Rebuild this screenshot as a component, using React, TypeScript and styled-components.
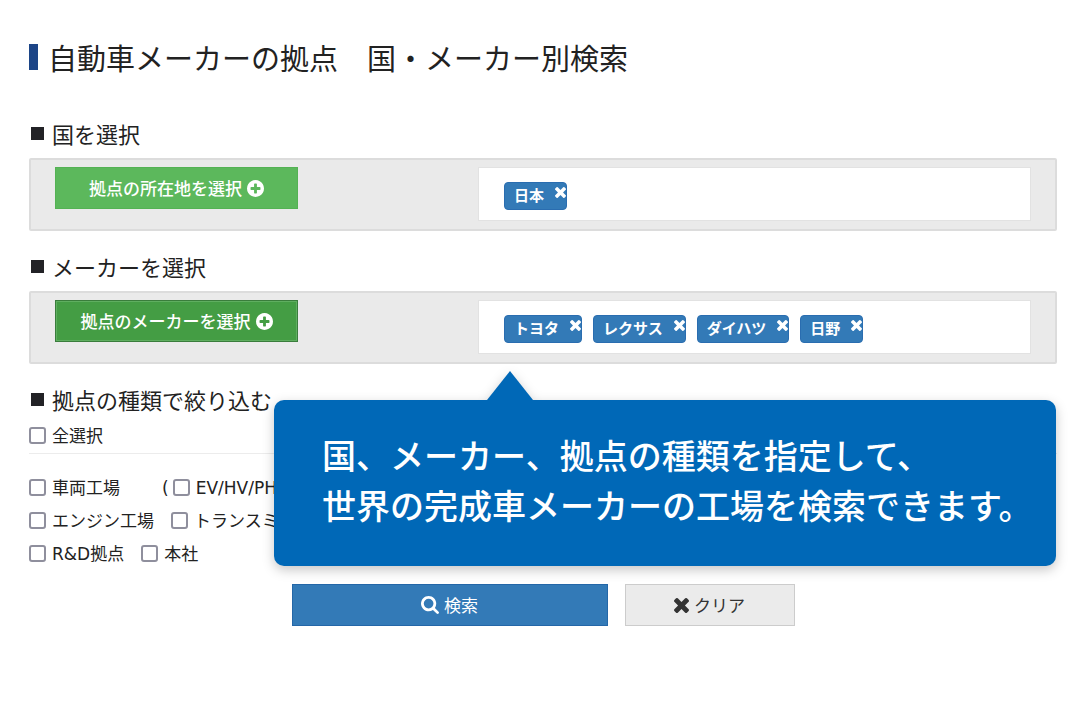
import React from "react";
import styled, { createGlobalStyle, css } from "styled-components";

const GlobalStyle = createGlobalStyle`
  *, *::before, *::after { box-sizing: border-box; }
  body {
    margin: 0;
    background: #fff;
    color: #222;
    font-family: "Noto Sans CJK JP", "Noto Sans", sans-serif;
    font-size: 17px;
  }
`;

const Page = styled.main`
  padding: 36px 29px 32px;
`;

const Title = styled.h1`
  display: flex;
  align-items: center;
  gap: 10px;
  margin: 0 0 40px;
  font-size: 29px;
  font-weight: 400;
  line-height: 42px;

  &::before {
    content: "";
    width: 9px;
    height: 26px;
    background: #1c4587;
  }
`;

const Section = styled.section`
  margin-bottom: 20px;
`;

const Heading = styled.h2`
  display: flex;
  align-items: center;
  gap: 8px;
  margin: 0;
  padding-left: 2px;
  font-size: 22px;
  font-weight: 400;
  line-height: 30px;

  &::before {
    content: "";
    width: 13px;
    height: 13px;
    background: #222226;
  }
`;

const Panel = styled.div`
  display: grid;
  grid-template-columns: 13fr 17fr;
  align-items: start;
  margin-top: 10px;
  padding: 7px 24px 8px;
  border: 2px solid #dcdcdc;
  border-radius: 2px;
  background: #eaeaea;
`;

const buttonBase = css`
  display: inline-flex;
  align-items: center;
  justify-content: center;
  gap: 5px;
  height: 42px;
  padding: 0;
  border: 1px solid;
  font-family: inherit;
  font-size: 17px;
  line-height: 24px;
  cursor: pointer;
`;

const PickButton = styled.button<{ $active?: boolean }>`
  ${buttonBase}
  width: 243px;
  font-weight: 500;
  color: #fff;
  background: ${(p) => (p.$active ? "#449d44" : "#5cb85c")};
  border-color: ${(p) => (p.$active ? "#3a7d3c" : "#54b254")};
  box-shadow: ${(p) => (p.$active ? "inset 0 0 0 1px #5fae60" : "none")};
`;

const Well = styled.ul`
  display: flex;
  flex-wrap: wrap;
  gap: 11px;
  min-height: 54px;
  margin: 0;
  padding: 14px 25px 10px;
  border: 1px solid #e2e2e2;
  background: #fff;
  list-style: none;
`;

const Tag = styled.li`
  display: flex;
  align-items: flex-start;
  justify-content: space-between;
  gap: 11px;
  height: 28px;
  padding-left: 9px;
  border: 1px solid #2a6db0;
  border-radius: 4px;
  background: #337ab7;
  color: #fff;
  font-size: 15px;
  font-weight: 700;
  line-height: 24px;
`;

const RemoveButton = styled.button`
  display: flex;
  margin-top: 4px;
  padding: 0;
  border: 0;
  background: none;
  color: inherit;
  cursor: pointer;
`;

const Filter = styled.section`
  position: relative;
`;

const OptionRow = styled.div`
  display: flex;
  align-items: center;
  gap: 17px;
  height: 33px;
  font-family: "DejaVu Sans", "Noto Sans CJK JP", sans-serif;
  white-space: nowrap;
`;

const SelectAllRow = styled(OptionRow)`
  height: 40px;
  margin-bottom: 17px;
  padding-top: 4px;
  border-bottom: 1px solid #ececec;
`;

const Group = styled.span`
  display: flex;
  align-items: center;
  gap: 4px;
  padding-left: 25px;
`;

const OptionLabel = styled.label`
  display: flex;
  align-items: center;
  gap: 6px;
  line-height: 24px;
`;

const Checkbox = styled.input`
  appearance: none;
  width: 17px;
  height: 17px;
  margin: 0;
  border: 2px solid #8f8f9d;
  border-radius: 3px;
  background: #fff;

  &:checked {
    background: #337ab7;
  }
`;

const Callout = styled.aside`
  position: absolute;
  top: 16px;
  left: 245px;
  right: 1px;
  padding: 30px 16px 36px 48px;
  border-radius: 10px;
  background: #0068b7;
  color: #fff;
  filter: drop-shadow(0 4px 6px rgba(0, 0, 0, 0.22));

  &::before {
    content: "";
    position: absolute;
    bottom: 100%;
    left: 213px;
    border: solid transparent;
    border-width: 0 23px 29px;
    border-bottom-color: #0068b7;
  }
`;

const CalloutText = styled.p`
  margin: 0;
  font-size: 34px;
  font-weight: 500;
  line-height: 50px;
`;

const Actions = styled.div`
  display: flex;
  justify-content: center;
  gap: 17px;
  margin-top: 14px;
`;

const SearchButton = styled.button`
  ${buttonBase}
  width: 316px;
  color: #fff;
  background: #337ab7;
  border-color: #2467a8;
`;

const ClearButton = styled.button`
  ${buttonBase}
  width: 170px;
  color: #333;
  background: #ebebeb;
  border-color: #ccc;
`;

const ICONS = {
  plus: "M1344 960v-128q0-26-19-45t-45-19h-256v-256q0-26-19-45t-45-19h-128q-26 0-45 19t-19 45v256h-256q-26 0-45 19t-19 45v128q0 26 19 45t45 19h256v256q0 26 19 45t45 19h128q26 0 45-19t19-45v-256h256q26 0 45-19t19-45zm320-64q0 209-103 385.5t-279.5 279.5-385.5 103-385.5-103-279.5-279.5-103-385.5 103-385.5 279.5-279.5 385.5-103 385.5 103 279.5 279.5 103 385.5z",
  times:
    "M1490 1322q0 40-28 68l-136 136q-28 28-68 28t-68-28l-294-294-294 294q-28 28-68 28t-68-28l-136-136q-28-28-28-68t28-68l294-294-294-294q-28-28-28-68t28-68l136-136q28-28 68-28t68 28l294 294 294-294q28-28 68-28t68 28l136 136q28 28 28 68t-28 68l-294 294 294 294q28 28 28 68z",
  search:
    "M1216 832q0-185-131.5-316.5t-316.5-131.5-316.5 131.5-131.5 316.5 131.5 316.5 316.5 131.5 316.5-131.5 131.5-316.5zm512 832q0 52-38 90t-90 38q-54 0-90-38l-343-342q-179 124-399 124-143 0-273.5-55.5t-225-150-150-225-55.5-273.5 55.5-273.5 150-225 225-150 273.5-55.5 273.5 55.5 225 150 150 225 55.5 273.5q0 220-124 399l343 343q37 37 37 90z",
};

const VIEW_BOXES = {
  plus: "128 128 1536 1536",
  times: "302 366 1188 1188",
  search: "64 128 1664 1664",
};

function Icon({ name, size }: { name: keyof typeof ICONS; size: number }) {
  return (
    <svg width={size} height={size} viewBox={VIEW_BOXES[name]} fill="currentColor" aria-hidden="true">
      <path d={ICONS[name]} />
    </svg>
  );
}

function TagList({ items }: { items: string[] }) {
  return (
    <Well>
      {items.map((item) => (
        <Tag key={item}>
          {item}
          <RemoveButton type="button" aria-label={`${item}を削除`}>
            <Icon name="times" size={11} />
          </RemoveButton>
        </Tag>
      ))}
    </Well>
  );
}

function Option({ label }: { label: string }) {
  return (
    <OptionLabel>
      <Checkbox type="checkbox" />
      {label}
    </OptionLabel>
  );
}

export default function App() {
  return (
    <>
      <GlobalStyle />
      <Page>
        <Title>自動車メーカーの拠点　国・メーカー別検索</Title>

        <Section>
          <Heading>国を選択</Heading>
          <Panel>
            <PickButton type="button">
              拠点の所在地を選択
              <Icon name="plus" size={17} />
            </PickButton>
            <TagList items={["日本"]} />
          </Panel>
        </Section>

        <Section>
          <Heading>メーカーを選択</Heading>
          <Panel>
            <PickButton type="button" $active>
              拠点のメーカーを選択
              <Icon name="plus" size={17} />
            </PickButton>
            <TagList items={["トヨタ", "レクサス", "ダイハツ", "日野"]} />
          </Panel>
        </Section>

        <Filter>
          <Heading>拠点の種類で絞り込む</Heading>
          <SelectAllRow>
            <Option label="全選択" />
          </SelectAllRow>
          <OptionRow>
            <Option label="車両工場" />
            <Group>
              (
              <Option label="EV/HV/PHV" />
              )
            </Group>
          </OptionRow>
          <OptionRow>
            <Option label="エンジン工場" />
            <Option label="トランスミッション" />
          </OptionRow>
          <OptionRow>
            <Option label="R&D拠点" />
            <Option label="本社" />
          </OptionRow>
          <Callout>
            <CalloutText>
              国、メーカー、拠点の種類を指定して、
              <br />
              世界の完成車メーカーの工場を検索できます。
            </CalloutText>
          </Callout>
        </Filter>

        <Actions>
          <SearchButton type="button">
            <Icon name="search" size={18} />
            検索
          </SearchButton>
          <ClearButton type="button">
            <Icon name="times" size={15} />
            クリア
          </ClearButton>
        </Actions>
      </Page>
    </>
  );
}
